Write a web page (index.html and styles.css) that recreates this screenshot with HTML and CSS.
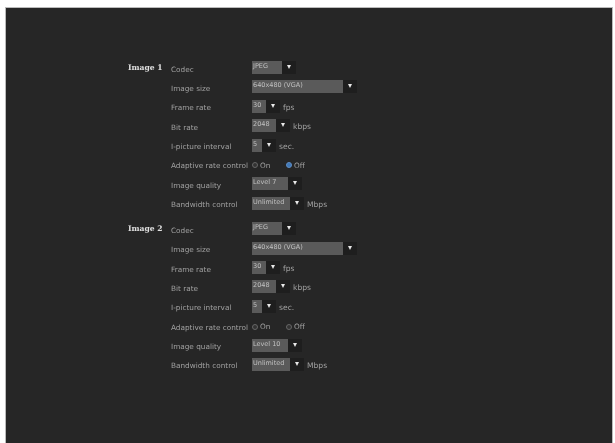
FILE: index.html
```html
<!DOCTYPE html>
<html lang="en">
  <head>
    <meta charset="UTF-8" />
    <meta name="viewport" content="width=device-width, initial-scale=1.0" />
    <title>Video settings</title>
    <link rel="stylesheet" href="styles.css">
  </head>
  <body>
    <div class="panel">
      <div class="image-group">
        <div class="group-title">Image 1</div>
        <div class="rows">
          <div class="row"><span class="label">Codec</span><span class="select w-codec"><span class="value">JPEG</span><span class="arrow"></span></span></div>
          <div class="row"><span class="label">Image size</span><span class="select w-size"><span class="value">640x480 (VGA)</span><span class="arrow"></span></span></div>
          <div class="row"><span class="label">Frame rate</span><span class="select w-frame"><span class="value">30</span><span class="arrow"></span></span><span class="unit">fps</span></div>
          <div class="row"><span class="label">Bit rate</span><span class="select w-bit"><span class="value">2048</span><span class="arrow"></span></span><span class="unit">kbps</span></div>
          <div class="row"><span class="label">I-picture interval</span><span class="select w-interval"><span class="value">5</span><span class="arrow"></span></span><span class="unit">sec.</span></div>
          <div class="row"><span class="label">Adaptive rate control</span><span class="radio-pair"><span class="radio-item"><span class="radio"></span>On</span><span class="radio-item"><span class="radio checked"></span>Off</span></span></div>
          <div class="row"><span class="label">Image quality</span><span class="select w-quality"><span class="value">Level 7</span><span class="arrow"></span></span></div>
          <div class="row"><span class="label">Bandwidth control</span><span class="select w-band"><span class="value">Unlimited</span><span class="arrow"></span></span><span class="unit">Mbps</span></div>
        </div>
      </div>
      <div class="image-group">
        <div class="group-title">Image 2</div>
        <div class="rows">
          <div class="row"><span class="label">Codec</span><span class="select w-codec"><span class="value">JPEG</span><span class="arrow"></span></span></div>
          <div class="row"><span class="label">Image size</span><span class="select w-size"><span class="value">640x480 (VGA)</span><span class="arrow"></span></span></div>
          <div class="row"><span class="label">Frame rate</span><span class="select w-frame"><span class="value">30</span><span class="arrow"></span></span><span class="unit">fps</span></div>
          <div class="row"><span class="label">Bit rate</span><span class="select w-bit"><span class="value">2048</span><span class="arrow"></span></span><span class="unit">kbps</span></div>
          <div class="row"><span class="label">I-picture interval</span><span class="select w-interval"><span class="value">5</span><span class="arrow"></span></span><span class="unit">sec.</span></div>
          <div class="row"><span class="label">Adaptive rate control</span><span class="radio-pair"><span class="radio-item"><span class="radio"></span>On</span><span class="radio-item"><span class="radio"></span>Off</span></span></div>
          <div class="row"><span class="label">Image quality</span><span class="select w-quality"><span class="value">Level 10</span><span class="arrow"></span></span></div>
          <div class="row"><span class="label">Bandwidth control</span><span class="select w-band"><span class="value">Unlimited</span><span class="arrow"></span></span><span class="unit">Mbps</span></div>
        </div>
      </div>
    </div>
  </body>
</html>
```

FILE: styles.css
```css
html,
body {
  height: 100%;
}

body {
  margin: 0;
  padding: 7px 2px 0 5px;
  box-sizing: border-box;
  background-color: #fff;
  font-family: "DejaVu Sans", sans-serif;
  overflow: hidden;
}

.panel {
  height: 100%;
  box-sizing: border-box;
  padding: 53px 0 0 122px;
  background-color: #262626;
  border-top: 1px solid #bbb;
  border-left: 1px solid #bbb;
  border-right: 1px solid #bbb;
  filter: blur(0.7px);
}

.image-group {
  display: flex;
  margin-bottom: 12.5px;
}

.group-title {
  width: 43px;
  color: #e0e0e0;
  font-family: "DejaVu Serif", serif;
  font-size: 7.6px;
  font-weight: bold;
  line-height: 13px;
}

.rows {
  display: flex;
  flex-direction: column;
  gap: 6.4px;
}

.row {
  display: flex;
  align-items: center;
  height: 13px;
  color: #a0a0a0;
  font-size: 7.3px;
}

.label {
  width: 81px;
  padding-top: 3px;
  flex-shrink: 0;
  white-space: nowrap;
}

.select {
  display: flex;
  height: 13px;
}

.value {
  flex: 1;
  padding-left: 1px;
  background-color: #5a5a5a;
  color: #c0c0c0;
  font-size: 6.5px;
  line-height: 10px;
  white-space: nowrap;
  overflow: hidden;
}

.arrow {
  position: relative;
  width: 14px;
  background-color: #1e1e1e;
}

/* small white triangle */
.arrow::after {
  content: "";
  position: absolute;
  left: 5px;
  top: 4px;
  border-left: 2.5px solid transparent;
  border-right: 2.5px solid transparent;
  border-top: 4px solid #e8e8e8;
}

.w-codec { width: 44px; }
.w-size { width: 105px; }
.w-frame { width: 28px; }
.w-bit { width: 38px; }
.w-interval { width: 24px; }
.w-quality { width: 50px; }
.w-band { width: 52px; }

.unit {
  margin-left: 3px;
  padding-top: 2px;
  font-size: 7.6px;
}

.radio-pair {
  display: flex;
  padding-top: 2px;
}

.radio-item {
  display: flex;
  align-items: center;
  gap: 2px;
  width: 34px;
}

.radio {
  width: 4px;
  height: 4px;
  border: 1px solid #666;
  border-radius: 50%;
  background-color: #333;
}

.radio.checked {
  background-color: #3f78b8;
  border-color: #5f8dc4;
}
```
